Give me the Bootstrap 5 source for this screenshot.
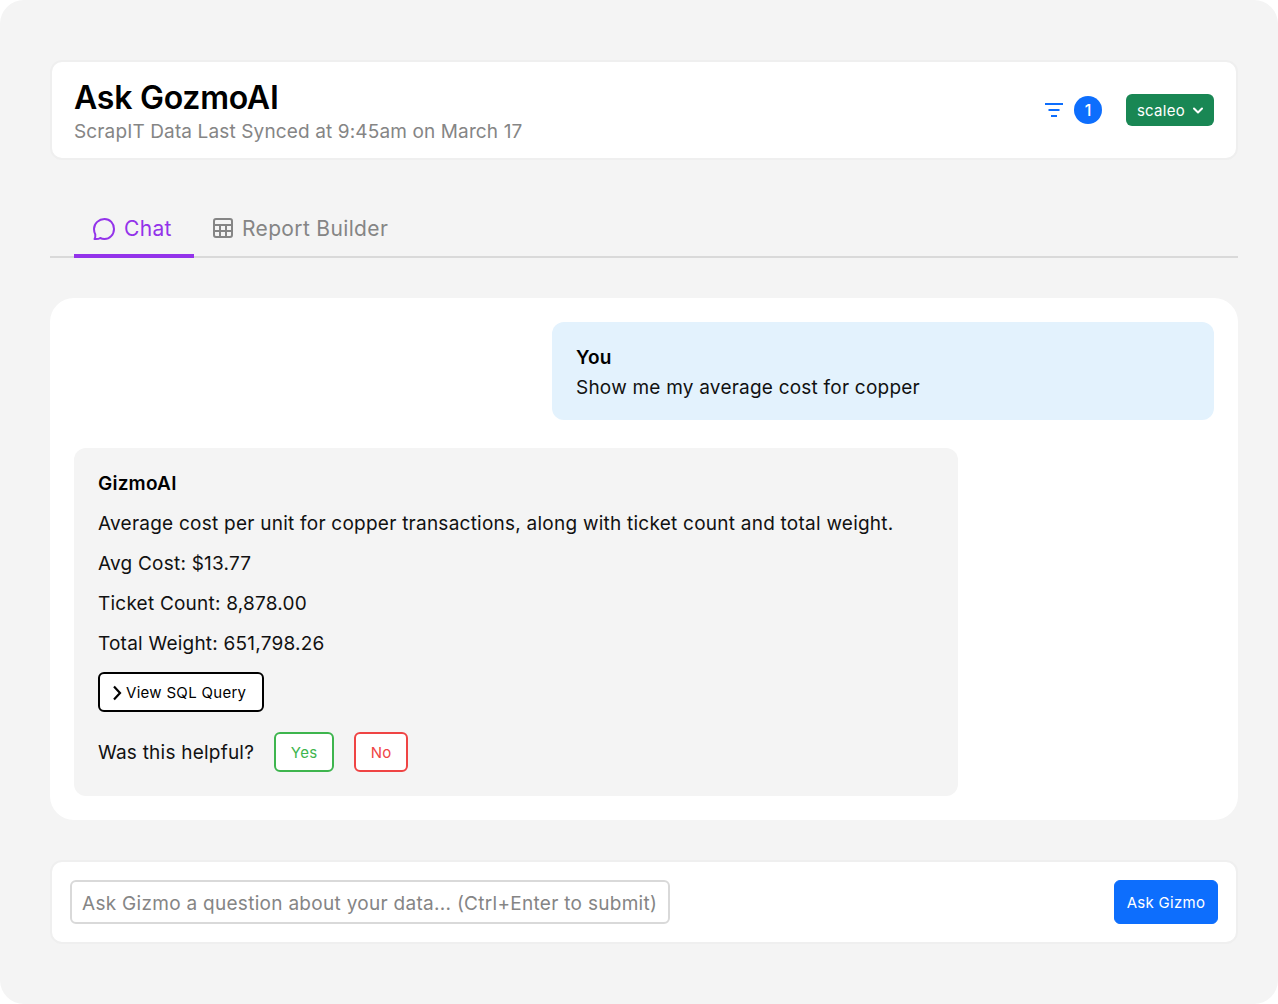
<!DOCTYPE html>
<html lang="en">
<head>
<meta charset="utf-8">
<title>Ask GozmoAI</title>
<link href="https://cdn.jsdelivr.net/npm/bootstrap@5.3.0/dist/css/bootstrap.min.css" rel="stylesheet">
<style>
html,body{height:100%;}
body{background:#fff;font-family:"Inter","Liberation Sans",sans-serif;color:#111;letter-spacing:.22px;}
.gz-shell{width:1278px;height:1004px;background:#f4f4f4;border-radius:24px;padding:60px 40px 60px 50px;}
.gz-top{height:100px;background:#fff;border:2px solid #efefef;border-radius:12px;padding:0 22px;}
.gz-title{font-size:32px;font-weight:600;line-height:36px;color:#000;letter-spacing:-.25px;margin:6px 0 0;}
.gz-sub{font-size:19px;line-height:28px;color:#858585;letter-spacing:.13px;margin-top:2px;}
.gz-count{width:28px;height:28px;font-size:16px;font-weight:500;letter-spacing:0;}
.gz-scaleo{width:88px;height:32px;font-size:15px;border-radius:6px;background:#198754;border:0;padding:2px 0 0;letter-spacing:.3px;}
.gz-tabs{height:58px;margin-top:40px;border-bottom:2px solid #d9d9d9;padding-left:24px;}
.gz-tab{font-size:21px;line-height:28px;color:#858585;height:58px;margin-bottom:-2px;padding-top:15px;letter-spacing:.35px;}
.gz-tab-on{color:#9333ea;border-bottom:4px solid #9333ea;width:120px;padding-left:18px;}
.gz-tab-off{padding-left:18px;}
.gz-ico{margin-top:2px;}
.gz-panel{height:522px;margin-top:40px;background:#fff;border-radius:24px;padding:24px;}
.gz-you{margin-left:478px;height:98px;background:#e3f2fd;border-radius:12px;padding:21px 24px 0;font-size:19px;line-height:30px;}
.gz-bot{width:884px;height:348px;margin-top:28px;background:#f4f4f4;border-radius:12px;padding:21px 24px 0;font-size:19px;}
.gz-line{line-height:30px;margin-bottom:10px;}
.gz-long{letter-spacing:.24px;}
.gz-who{font-weight:600;color:#000;}
.gz-sql{width:166px;height:40px;background:#fff;border:2px solid #000;border-radius:6px;font-size:15px;color:#000;padding:2px 0 0 12px;margin-top:13px;letter-spacing:.3px;}
.gz-help{margin-top:20px;height:40px;}
.gz-q{padding-top:3px;}
.gz-fb{height:40px;background:#fff;border-width:2px;border-style:solid;border-radius:6px;font-size:15px;padding:2px 0 0;letter-spacing:.3px;}
.gz-yes{width:60px;border-color:#3eb54e;color:#3eb54e;margin-left:20px;}
.gz-no{width:54px;border-color:#ef4444;color:#ef4444;margin-left:20px;}
.gz-ask{height:84px;margin-top:40px;background:#fff;border:2px solid #efefef;border-radius:12px;padding:0 18px;}
.gz-input{width:600px;height:44px;border:2px solid #d9d9d9;border-radius:6px;font-size:19px;padding:2px 10px 0;letter-spacing:.29px;}
.gz-input::placeholder{color:#858585;opacity:1;}
.gz-send{width:104px;height:44px;font-size:15px;border-radius:6px;padding:2px 0 0;letter-spacing:.3px;}
.gz-filter{margin-right:2px;}
</style>
</head>
<body>
<div class="gz-shell">
  <div class="gz-top d-flex align-items-center justify-content-between">
    <div>
      <h1 class="gz-title">Ask GozmoAI</h1>
      <div class="gz-sub">ScrapIT Data Last Synced at 9:45am on March 17</div>
    </div>
    <div class="d-flex align-items-center">
      <svg class="gz-filter" width="20" height="16" viewBox="0 0 20 16" fill="none" stroke="#0d6efd" stroke-width="2"><path d="M1 2h18M4.500 8h11M7 14h6"/></svg>
      <span class="gz-count rounded-circle text-bg-primary d-flex align-items-center justify-content-center ms-2">1</span>
      <button type="button" class="gz-scaleo btn text-white d-flex align-items-center justify-content-center gap-2 ms-4">scaleo
        <svg width="10" height="8" viewBox="0 0 10 8" fill="none" stroke="#fff" stroke-width="2" stroke-linecap="round" stroke-linejoin="round"><path d="M1 1.500l4 4 4-4"/></svg>
      </button>
    </div>
  </div>

  <div class="gz-tabs d-flex">
    <div class="gz-tab gz-tab-on d-flex gap-2">
      <svg class="gz-ico" width="24" height="24" viewBox="0 0 24 24" fill="none" stroke="#9333ea" stroke-width="2" stroke-linejoin="round"><path d="M12.500 2C18 2 22 6.300 22 12s-4.400 10-9.500 10c-1.500 0-3-.3-4.300-1-1 .8-3 1.200-5.700 1 .7-1 1-2.500.8-4.500C2.500 15.800 2 14 2 12 2 6.300 7 2 12.500 2z"/></svg>
      <span>Chat</span>
    </div>
    <div class="gz-tab gz-tab-off d-flex gap-2">
      <svg class="gz-ico" width="22" height="22" viewBox="0 0 22 22" fill="none" stroke="#858585" stroke-width="2"><rect x="2" y="2" width="18" height="18" rx="2"/><path d="M2 8h18M2 14h18M8 8v12M14 8v12"/></svg>
      <span>Report Builder</span>
    </div>
  </div>

  <div class="gz-panel">
    <div class="gz-you">
      <div class="gz-who">You</div>
      <div>Show me my average cost for copper</div>
    </div>
    <div class="gz-bot">
      <div class="gz-line gz-who">GizmoAI</div>
      <div class="gz-line gz-long">Average cost per unit for copper transactions, along with ticket count and total weight.</div>
      <div class="gz-line">Avg Cost: $13.77</div>
      <div class="gz-line">Ticket Count: 8,878.00</div>
      <div class="gz-line">Total Weight: 651,798.26</div>
      <button type="button" class="gz-sql btn d-flex align-items-center gap-1">
        <svg width="10" height="16" viewBox="0 0 10 16" fill="none" stroke="#000" stroke-width="2.200"><path d="M2 1.500l6 6.500-6 6.500"/></svg>
        View SQL Query
      </button>
      <div class="gz-help d-flex align-items-center">
        <span class="gz-q">Was this helpful?</span>
        <button type="button" class="gz-fb gz-yes btn">Yes</button>
        <button type="button" class="gz-fb gz-no btn">No</button>
      </div>
    </div>
  </div>

  <div class="gz-ask d-flex align-items-center justify-content-between">
    <input class="gz-input form-control" type="text" placeholder="Ask Gizmo a question about your data... (Ctrl+Enter to submit)">
    <button type="button" class="gz-send btn btn-primary">Ask Gizmo</button>
  </div>
</div>
<script src="https://cdn.jsdelivr.net/npm/bootstrap@5.3.0/dist/js/bootstrap.bundle.min.js"></script>
</body>
</html>
